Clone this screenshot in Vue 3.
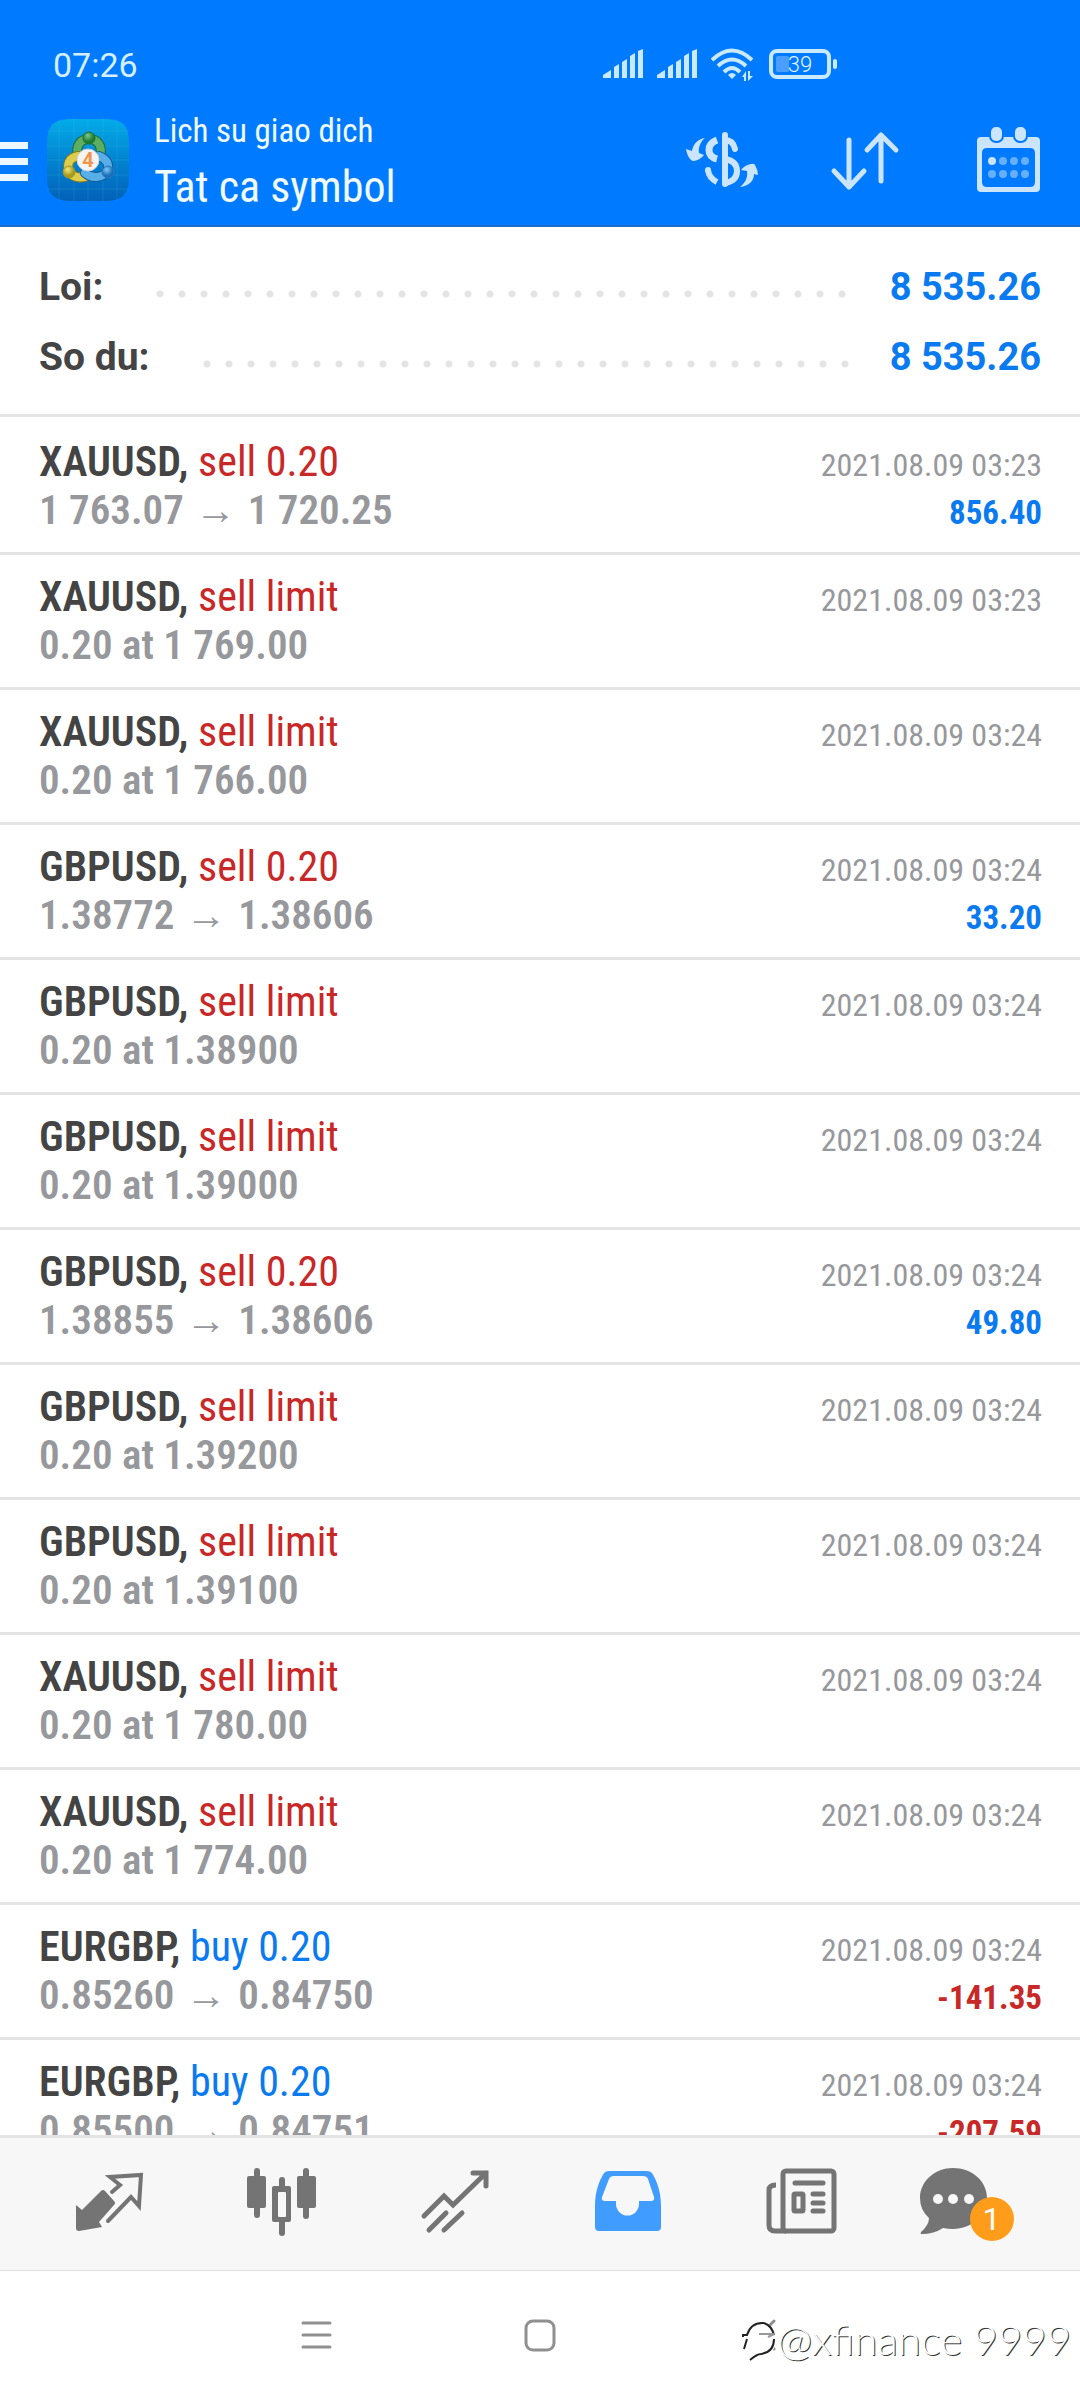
<script setup>
const summary = [
  { label: 'Loi:', value: '8 535.26' },
  { label: 'So du:', value: '8 535.26' },
]

const history = [
  { symbol: 'XAUUSD', side: 'sell', what: '0.20', from: '1 763.07', to: '1 720.25', time: '2021.08.09 03:23', profit: '856.40' },
  { symbol: 'XAUUSD', side: 'sell', what: 'limit', at: '1 769.00', time: '2021.08.09 03:23' },
  { symbol: 'XAUUSD', side: 'sell', what: 'limit', at: '1 766.00', time: '2021.08.09 03:24' },
  { symbol: 'GBPUSD', side: 'sell', what: '0.20', from: '1.38772', to: '1.38606', time: '2021.08.09 03:24', profit: '33.20' },
  { symbol: 'GBPUSD', side: 'sell', what: 'limit', at: '1.38900', time: '2021.08.09 03:24' },
  { symbol: 'GBPUSD', side: 'sell', what: 'limit', at: '1.39000', time: '2021.08.09 03:24' },
  { symbol: 'GBPUSD', side: 'sell', what: '0.20', from: '1.38855', to: '1.38606', time: '2021.08.09 03:24', profit: '49.80' },
  { symbol: 'GBPUSD', side: 'sell', what: 'limit', at: '1.39200', time: '2021.08.09 03:24' },
  { symbol: 'GBPUSD', side: 'sell', what: 'limit', at: '1.39100', time: '2021.08.09 03:24' },
  { symbol: 'XAUUSD', side: 'sell', what: 'limit', at: '1 780.00', time: '2021.08.09 03:24' },
  { symbol: 'XAUUSD', side: 'sell', what: 'limit', at: '1 774.00', time: '2021.08.09 03:24' },
  { symbol: 'EURGBP', side: 'buy', what: '0.20', from: '0.85260', to: '0.84750', time: '2021.08.09 03:24', profit: '-141.35' },
  { symbol: 'EURGBP', side: 'buy', what: '0.20', from: '0.85500', to: '0.84751', time: '2021.08.09 03:24', profit: '-207.59' },
]
</script>

<template>
  <div class="screen">
    <header class="header">
      <div class="status">
        <time class="clock">07:26</time>
        <div class="indicators">
          <svg v-for="n in 2" :key="n" class="signal" width="40" height="34" viewBox="0 0 40 34">
            <path d="M0 30V27L8 22V30ZM11 30V19L16 16V30ZM19 30V14L24 11V30ZM27 30V8L32 5V30ZM35 30V3L40 1V30Z" />
          </svg>
          <svg class="wifi" width="44" height="34" viewBox="0 0 44 34">
            <g fill="none" stroke="#c9e9ff" stroke-width="4">
              <path d="M1 12Q21 -7 41 12" /><path d="M7 18Q21 5 35 18" /><path d="M13 24Q21 16 29 24" />
            </g>
            <path d="M17 27Q21 23 25 27L21 31Z" />
            <path d="M35 23V33H33V29H31ZM37 33V23H39V28H42Z" />
          </svg>
          <svg class="battery" width="68" height="34" viewBox="0 0 68 34">
            <rect x="2" y="3" width="58" height="26" rx="6" fill="none" stroke="#c9e9ff" stroke-width="4" />
            <rect x="7" y="8" width="13" height="16" rx="2" fill="#4a9eff" />
            <rect x="64" y="11" width="4" height="10" rx="2" />
            <text x="31" y="24" text-anchor="middle">39</text>
          </svg>
        </div>
      </div>

      <div class="toolbar">
        <button class="menu" aria-label="Menu">
          <svg width="28" height="42" viewBox="0 0 28 42"><path d="M0 3H28V10H0ZM0 19H28V26H0ZM0 35H28V42H0Z" /></svg>
        </button>
        <svg class="logo" width="82" height="82" viewBox="0 0 82 82" aria-hidden="true">
          <defs>
            <linearGradient id="sky" x1="0" y1="0" x2="0" y2="1"><stop offset="0" stop-color="#04abe8" /><stop offset=".5" stop-color="#0284d0" /><stop offset="1" stop-color="#0261b8" /></linearGradient>
            <radialGradient id="green" cx=".4" cy=".3"><stop offset="0" stop-color="#7cc983" /><stop offset="1" stop-color="#1d7c35" /></radialGradient>
            <radialGradient id="gold" cx=".4" cy=".3"><stop offset="0" stop-color="#f3e878" /><stop offset="1" stop-color="#a79a1e" /></radialGradient>
            <radialGradient id="blue" cx=".4" cy=".3"><stop offset="0" stop-color="#82c9f5" /><stop offset="1" stop-color="#1a6fb8" /></radialGradient>
          </defs>
          <path d="M0 26C0 6 6 0 26 0H56C76 0 82 6 82 26V56C82 76 76 82 56 82H26C6 82 0 76 0 56Z" fill="url(#sky)" />
          <path d="M12 0V82M27 0V82M41 0V82M56 0V82M70 0V82M0 12H82M0 27H82M0 41H82M0 56H82M0 70H82" stroke="#6cc8f5" stroke-opacity=".15" />
          <g fill="none" stroke-linecap="round">
            <path d="M31 38C28 26 34 20 42 20S56 26 53 38" stroke="#1c6c38" stroke-width="10" />
            <path d="M31 38C28 26 34 20 42 20S56 26 53 38" stroke="#5cae62" stroke-width="8" />
            <path d="M31 37C21 39 20 46 22 52S33 60 41 57" stroke="#82791c" stroke-width="10" />
            <path d="M31 37C21 39 20 46 22 52S33 60 41 57" stroke="#dccd4c" stroke-width="8" />
            <path d="M52 37C60 40 63 46 60 52S46 61 38 54" stroke="#145a9c" stroke-width="10" />
            <path d="M52 37C60 40 63 46 60 52S46 61 38 54" stroke="#58aee6" stroke-width="8" />
          </g>
          <circle cx="42" cy="19" r="6" fill="url(#green)" stroke="#1c6c38" />
          <circle cx="22" cy="53" r="6" fill="url(#gold)" stroke="#a3982a" />
          <circle cx="61" cy="53" r="6" fill="url(#blue)" stroke="#2a78b8" />
          <circle cx="41" cy="41" r="11" fill="#f6f4f2" stroke="#ccd2d6" />
          <text class="logo-digit" x="41" y="48" text-anchor="middle">4</text>
        </svg>
        <div class="titles">
          <p class="subtitle">Lich su giao dich</p>
          <h1 class="title">Tat ca symbol</h1>
        </div>
        <div class="actions">
          <button aria-label="Symbol">
            <svg width="80" height="80" viewBox="0 0 80 80">
              <path d="M42 15V64" fill="none" stroke="#cce5ff" stroke-width="6" stroke-linecap="round" />
              <g fill="none" stroke="#cce5ff" stroke-width="6">
                <path d="M42 20Q50 20 52 29" stroke-linecap="round" />
                <path d="M42 39Q54 41 54 51T42 63" />
                <path d="M34 20Q26 23 26 30T34 39" stroke-width="7" />
                <path d="M25 50Q26 58 34 62" />
              </g>
              <circle cx="25" cy="50" r="3" />
              <path d="M22 18C15 19 10 24 9 31L3 29Q4 36 8 40Q9 41 11 41Q17 40 21 35L16 33C15 27 18 21 22 18Z" />
              <path d="M57 67C66 66 71 61 71 54L75 55Q75 50 72 45Q71 43 68 44Q62 45 58 50L64 51C65 58 62 63 57 67Z" />
            </svg>
          </button>
          <button aria-label="Sort">
            <svg width="80" height="80" viewBox="0 0 80 80">
              <path d="M23 20V67M8 51L23 67L38 51M55 61V15M41 30L55 15L70 30" fill="none" stroke="#cce5ff" stroke-width="5" stroke-linecap="round" stroke-linejoin="round" />
            </svg>
          </button>
          <button aria-label="Period">
            <svg width="80" height="80" viewBox="0 0 80 80">
              <path fill-rule="evenodd" d="M12 17H67Q71 17 71 21V68Q71 72 67 72H12Q8 72 8 68V21Q8 17 12 17ZM18 28Q13 28 13 33V62Q13 67 18 67H61Q66 67 66 62V33Q66 28 61 28Z" />
              <g stroke="#007aff" stroke-width="4" paint-order="stroke">
                <rect x="22" y="7" width="11" height="14" rx="5" /><rect x="46" y="7" width="11" height="14" rx="5" />
              </g>
              <circle cx="23" cy="41" r="4" />
              <g fill="#66afff">
                <circle cx="34" cy="41" r="4" /><circle cx="45" cy="41" r="4" /><circle cx="56" cy="41" r="4" />
                <circle cx="23" cy="54" r="4" /><circle cx="34" cy="54" r="4" /><circle cx="45" cy="54" r="4" /><circle cx="56" cy="54" r="4" />
              </g>
            </svg>
          </button>
        </div>
      </div>
    </header>

    <dl class="summary">
      <div v-for="s in summary" :key="s.label" class="summary-row">
        <dt>{{ s.label }}</dt>
        <dd class="leader" aria-hidden="true"></dd>
        <dd class="amount">{{ s.value }}</dd>
      </div>
    </dl>

    <ul class="history">
      <li v-for="(h, i) in history" :key="i" class="deal">
        <div class="line">
          <span class="name"><b>{{ h.symbol }},</b> <span :class="h.side">{{ h.side }} {{ h.what }}</span></span>
          <time class="time">{{ h.time }}</time>
        </div>
        <div class="line">
          <span v-if="h.from" class="price">{{ h.from }} <span class="arrow">→</span> {{ h.to }}</span>
          <span v-else class="price">0.20 at {{ h.at }}</span>
          <b v-if="h.profit" class="profit" :class="{ loss: h.profit.startsWith('-') }">{{ h.profit }}</b>
        </div>
      </li>
    </ul>

    <nav class="tabs">
      <button aria-label="Quotes">
        <svg width="96" height="72" viewBox="0 0 96 72">
          <path d="M41 23Q43 21 45 23L54 33Q56 35 54 37L39 54L42 59L19 63Q16 63 16 60V37L22 42Z" />
          <path d="M52 24L60 17L50 9L81 7L79 38L71 29L48 53" fill="none" stroke="#747474" stroke-width="4" stroke-linecap="round" />
        </svg>
      </button>
      <button aria-label="Charts">
        <svg width="96" height="72" viewBox="0 0 96 72">
          <rect x="14" y="8" width="19" height="32" rx="2" /><rect x="21" y="0" width="6" height="50" rx="3" />
          <rect x="64" y="8" width="19" height="32" rx="2" /><rect x="70" y="0" width="6" height="51" rx="3" />
          <path fill-rule="evenodd" d="M41 18H46V12Q46 9 49 9T52 12V18H56Q58 18 58 20V52Q58 54 56 54H52V65Q52 68 49 68T46 65V54H41Q39 54 39 52V20Q39 18 41 18ZM46 24Q45 24 45 25V48Q45 49 46 49H52Q53 49 53 48V25Q53 24 52 24Z" />
        </svg>
      </button>
      <button aria-label="Trade">
        <svg width="96" height="72" viewBox="0 0 96 72">
          <path d="M18 48L38 28L47 37L80 5M67 5H80V18M23 62L40 45M38 62L56 45" fill="none" stroke="#747474" stroke-width="5" stroke-linecap="round" />
        </svg>
      </button>
      <button class="active" aria-label="History" aria-current="page">
        <svg width="96" height="72" viewBox="0 0 96 72">
          <path fill-rule="evenodd" d="M16 38C16 24 20 13 25 5Q27 3 30 3H68Q71 3 73 5C78 13 82 24 82 38V59Q82 63 78 63H20Q16 63 16 59ZM35 8Q31 8 30 11L23 29Q22 33 26 33H37V36A11 11 0 0 0 60 36V33H72Q76 33 75 29L69 11Q68 8 64 8Z" />
        </svg>
      </button>
      <button aria-label="News">
        <svg width="96" height="72" viewBox="0 0 96 72">
          <g fill="none" stroke="#747474" stroke-width="5">
            <rect x="31" y="3" width="51" height="60" rx="3" />
            <path d="M24 17Q17 17 17 22V57Q17 63 23 63H34" />
            <path d="M43 15H71M61 26H71M61 35H71M61 43H71" stroke-linecap="round" />
            <rect x="42" y="26" width="9" height="17" rx="1" />
          </g>
        </svg>
      </button>
      <button aria-label="Messages">
        <svg width="96" height="72" viewBox="0 0 96 72">
          <path d="M28 0C47 0 62 13 62 30S47 61 28 61Q23 61 18 60Q9 66 -3 66Q-5 66 -4 64Q4 57 4 50Q-5 42 -5 30C-5 13 10 0 28 0Z" />
          <g fill="#f7f7f7"><circle cx="13" cy="31" r="5" /><circle cx="28" cy="31" r="5" /><circle cx="44" cy="31" r="5" /></g>
        </svg>
        <span class="badge">1</span>
      </button>
    </nav>

    <footer class="system">
      <button aria-label="Recent apps">
        <svg width="32" height="34" viewBox="0 0 32 34"><path d="M3 4H30M3 16H30M3 28H30" /></svg>
      </button>
      <button aria-label="Home">
        <svg width="32" height="34" viewBox="0 0 32 34"><rect x="2" y="2" width="28" height="29" rx="7" /></svg>
      </button>
      <button aria-label="Back">
        <svg width="32" height="34" viewBox="0 0 32 34"><path d="M26 2L12 16L26 30" /></svg>
      </button>
      <div class="watermark">
        <svg width="35" height="48" viewBox="0 0 35 48" aria-hidden="true">
          <path d="M5 18Q10 8 21 7L32 16V20L26 19L32 25V34L18 40L8 45L2 34Z" fill="#fff" />
          <path d="M22 8Q9 7 5 20H1V22M5 24L2 34M22 8Q30 11 32 20M32 24Q32 37 19 39Q15 39 8 45" fill="none" stroke="#222" stroke-width="2" />
          <path d="M17 19H32L26 22" fill="none" stroke="#999" stroke-width="2" />
        </svg>
        <span>@xfinance 9999</span>
      </div>
    </footer>
  </div>
</template>

<style>
body { margin: 0; background: #fff; }
</style>

<style scoped>
.screen {
  display: flex;
  flex-direction: column;
  height: 100vh;
  overflow: hidden;
  background: #fff;
  font-family: "Roboto Condensed", Roboto, sans-serif;
}
button {
  display: block;
  padding: 0;
  border: 0;
  background: none;
}
svg { display: block; flex: none; }
p, h1, dl, dd, ul { margin: 0; padding: 0; }

.header {
  flex: none;
  padding-top: 40px;
  border-bottom: 2px solid #1a6dc8;
  background: #007aff;
}
.status {
  display: flex;
  align-items: center;
  justify-content: space-between;
  height: 50px;
  padding: 0 243px 0 53px;
}
.clock { font: 34px/50px Roboto, sans-serif; color: #d4efff; }
.indicators { display: flex; align-items: center; gap: 14px; fill: #c9e9ff; }
.battery text { font: 300 22px Roboto, sans-serif; fill: #e4f4ff; }
.toolbar {
  display: flex;
  align-items: center;
  padding: 13px 31px 8px 0;
}
.menu { margin-right: 19px; fill: #ecf8ff; }
.logo-digit { font: 700 20px Roboto, sans-serif; fill: #f0954a; }
.titles { flex: 1; margin-left: 25px; padding-bottom: 2px; color: #f0fbff; }
.subtitle { font-size: 33px; line-height: 56px; }
.title { font-size: 44px; font-weight: 400; line-height: 56px; }
.actions { display: flex; gap: 63px; fill: #cce5ff; }

.summary {
  flex: none;
  padding: 25px 39px 22px;
  border-bottom: 3px solid #e4e4e4;
  font: 700 38px/70px Roboto, sans-serif;
}
.summary-row { display: flex; }
.summary dt { color: #444; font-size: 39px; }
.leader {
  flex: 1;
  margin: 0 32px 0 46px;
  background: radial-gradient(circle at 11px 42px, #e4e4e4 3px, transparent 4px) 0 0 / 22px 70px repeat-x;
}
.amount { color: #0a7af0; }

.history {
  flex: 1;
  min-height: 0;
  padding-top: 3px;
  overflow: hidden;
  list-style: none;
}
.deal {
  padding: 18px 38px 18px 39px;
  border-bottom: 3px solid #e4e4e4;
}
.line {
  display: flex;
  align-items: baseline;
  justify-content: space-between;
  height: 48px;
  line-height: 48px;
  white-space: nowrap;
}
.name { font-size: 42px; color: #444; }
.name b { font-weight: 600; }
.sell { color: #c82828; }
.buy { color: #0a7af0; }
.price { font-size: 41px; font-weight: 600; color: #97989c; }
.arrow { margin: 0 2px; font: 700 41px/41px "Liberation Sans", sans-serif; }
.time { font-size: 32px; color: #97989c; }
.profit { font-size: 33px; color: #0a7af0; }
.loss { color: #c82828; }

.tabs {
  display: grid;
  grid-template-columns: repeat(6, 1fr);
  flex: none;
  padding: 30px 21px;
  border-top: 3px solid #e4e4e4;
  background: #f7f7f7;
}
.tabs button { position: relative; justify-self: center; fill: #747474; }
.tabs .active { fill: #409cff; }
.tabs svg { overflow: visible; }
.badge {
  position: absolute;
  top: 29px;
  left: 45px;
  width: 44px;
  border-radius: 22px;
  background: #ff9d1a;
  color: #fff;
  font: 32px/44px Roboto, sans-serif;
  text-align: center;
}

.system {
  position: relative;
  display: flex;
  flex: none;
  align-items: center;
  justify-content: center;
  gap: 192px;
  height: 129px;
  border-top: 1px solid #e0e0e0;
}
.system button svg { fill: none; stroke: #909090; stroke-width: 3px; stroke-linecap: round; }
.watermark {
  position: absolute;
  top: 44px;
  right: 9px;
  display: flex;
  color: #fff;
  font: 300 42px/48px Lato, sans-serif;
  text-shadow: 1px 1px 0 #333;
  white-space: nowrap;
}
</style>
